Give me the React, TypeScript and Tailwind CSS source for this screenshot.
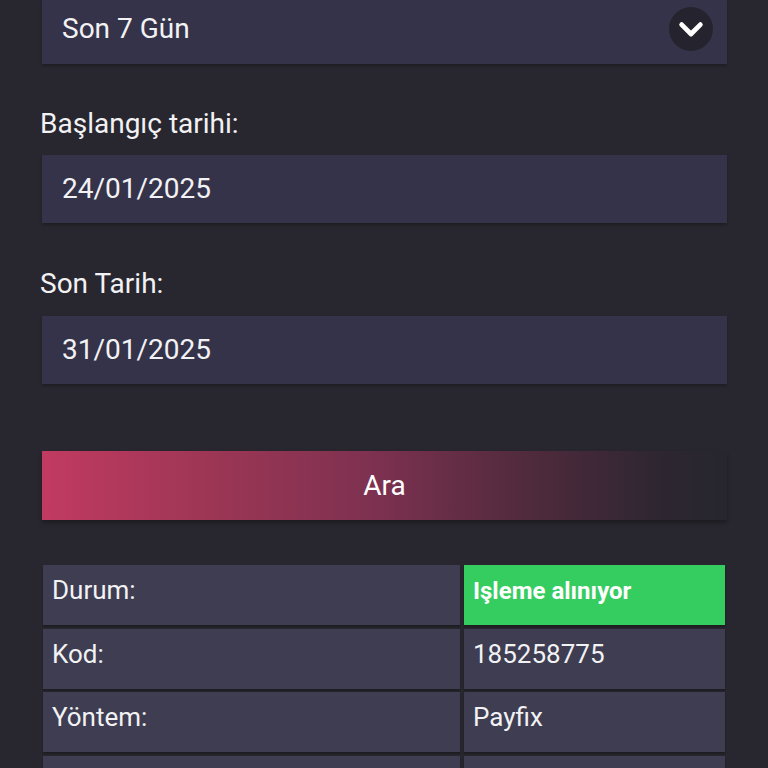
import React from "react";

const rows: { label: string; value: string; status?: boolean }[] = [
  { label: "Durum:", value: "Işleme alınıyor", status: true },
  { label: "Kod:", value: "185258775" },
  { label: "Yöntem:", value: "Payfix" },
  { label: "", value: "" },
];

function ChevronCircle() {
  return (
    <div className="flex h-[44px] w-[44px] items-center justify-center rounded-full bg-[#25242e]">
      <svg width="30" height="30" viewBox="0 0 24 24" fill="none">
        <path
          d="M4.5 8.5l7.5 7.5 7.5-7.5"
          stroke="#ffffff"
          strokeWidth="3.8"
          strokeLinecap="round"
          strokeLinejoin="round"
        />
      </svg>
    </div>
  );
}

export default function App() {
  return (
    <div className="h-[768px] overflow-hidden bg-[#28272f] font-['Roboto','Liberation_Sans',sans-serif] text-[#f2f2f4]">
      <div className="ml-[42px] w-[685px]">
        <div className="flex h-[64px] items-center justify-between bg-[#35334a] pb-[6px] pl-[20px] pr-[14px] shadow-[0_2px_3px_rgba(0,0,0,0.25)]">
          <span className="text-[28px] leading-[30px]">Son 7 Gün</span>
          <ChevronCircle />
        </div>

        <div className="mt-[45px] -ml-[2px] text-[28px] leading-[30px]">Başlangıç tarihi:</div>
        <div className="mt-[16px] flex h-[68px] items-center bg-[#35334a] pl-[20px] text-[28px] leading-[30px] shadow-[0_2px_3px_rgba(0,0,0,0.25)]">
          24/01/2025
        </div>

        <div className="mt-[46px] -ml-[2px] text-[28px] leading-[30px]">Son Tarih:</div>
        <div className="mt-[17px] flex h-[68px] items-center bg-[#35334a] pl-[20px] text-[28px] leading-[30px] shadow-[0_2px_3px_rgba(0,0,0,0.25)]">
          31/01/2025
        </div>

        <button className="mt-[67px] flex h-[69px] w-full items-center justify-center bg-[linear-gradient(to_right,#c23a61_0%,#9c3655_25%,#7e3150_48%,#4e2a3c_72%,#2e2632_90%,#26262e_100%)] text-[28px] leading-[30px] text-white shadow-[0_3px_4px_rgba(0,0,0,0.3)]">
          Ara
        </button>

        <div className="ml-[1px] mt-[45px] grid w-[682px] grid-cols-[417px_261px] gap-x-[4px] gap-y-[3.5px]">
          {rows.map((r, i) => (
            <React.Fragment key={i}>
              <div className="h-[60px] bg-[#3e3d51] pl-[9px] pt-[10px] text-[26px] leading-[30px] shadow-[0_2px_2px_rgba(0,0,0,0.3)]">
                {r.label}
              </div>
              <div
                className={
                  r.status
                    ? "h-[60px] bg-[#35cc60] pl-[9px] pt-[12px] text-[24px] font-bold leading-[28px] text-white shadow-[0_2px_2px_rgba(0,0,0,0.3)]"
                    : "h-[60px] bg-[#3e3d51] pl-[9px] pt-[10px] text-[26px] leading-[30px] shadow-[0_2px_2px_rgba(0,0,0,0.3)]"
                }
              >
                {r.value}
              </div>
            </React.Fragment>
          ))}
        </div>
      </div>
    </div>
  );
}
